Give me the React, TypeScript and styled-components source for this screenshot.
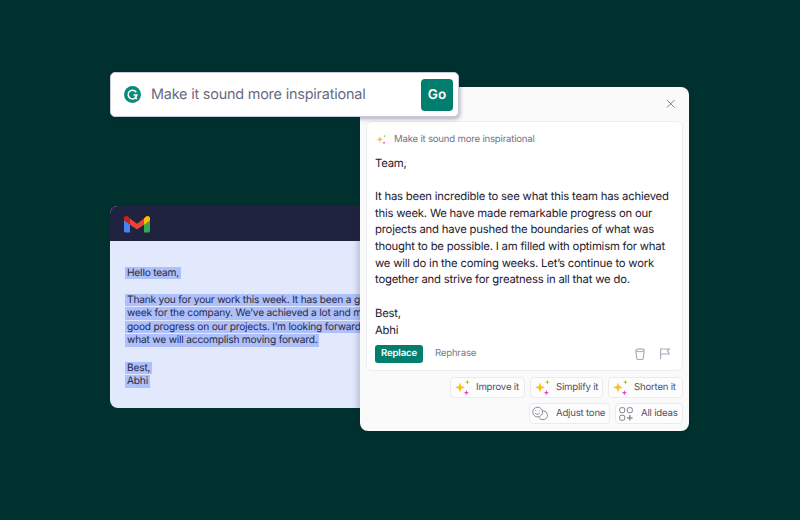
import React from "react";
import styled, { createGlobalStyle } from "styled-components";

const Global = createGlobalStyle`
  html, body { margin: 0; padding: 0; background: #00312e; }
  body { font-family: Inter, "Liberation Sans", sans-serif; }
  * { text-rendering: geometricPrecision; }
`;

const Canvas = styled.div`
  position: relative;
  width: 800px;
  height: 520px;
  overflow: hidden;
  background: #00312e;
`;

const MailWindow = styled.section`
  position: absolute;
  left: 110px;
  top: 206px;
  width: 252px;
  height: 202px;
  border-radius: 8px 0 0 8px;
  overflow: hidden;
  background: #e3e9fd;
  display: flex;
  flex-direction: column;
`;

const MailHeader = styled.header`
  flex: 0 0 35px;
  background: #20233f;
  display: flex;
  align-items: center;
  padding-left: 14px;
`;

const MailBody = styled.div`
  padding: 25.5px 0 0 15px;
  width: 300px;
  font-size: 10.2px;
  letter-spacing: -0.2px;
  line-height: 13.6px;
  color: #272a45;
  white-space: nowrap;
`;

const MailPara = styled.p`
  margin: 0 0 13.6px;
`;

const Line = styled.span`
  display: block;
  width: fit-content;
  height: 13.6px;
`;

const Sel = styled.span`
  display: inline-block;
  background: #aebffa;
  padding: 0 2px;
  height: 12.6px;
  line-height: 12.6px;
  vertical-align: top;
`;

const Panel = styled.section`
  position: absolute;
  left: 360px;
  top: 87px;
  width: 329px;
  height: 344px;
  box-sizing: border-box;
  border-radius: 8px;
  background: #fafafb;
  box-shadow: -2px 0 6px rgba(30, 35, 70, 0.25);
  padding: 34px 6px 7px;
  display: flex;
  flex-direction: column;
`;

const CloseBtn = styled.button`
  position: absolute;
  right: 13px;
  top: 11px;
  width: 11px;
  height: 11px;
  padding: 0;
  border: 0;
  background: none;
  display: flex;
  color: #7d8196;
`;

const DraftCard = styled.div`
  height: 250px;
  flex: none;
  box-sizing: border-box;
  background: #fff;
  border: 1px solid #eceef2;
  border-radius: 6px;
  padding: 10px 8px 0;
  display: flex;
  flex-direction: column;
`;

const PromptRow = styled.div`
  display: flex;
  align-items: center;
  gap: 7px;
  height: 15px;
  padding-left: 1px;
  font-size: 9.6px;
  letter-spacing: -0.2px;
  color: #6f7387;
`;

const DraftText = styled.div`
  margin-top: 7.5px;
  font-size: 11.3px;
  letter-spacing: -0.2px;
  line-height: 16.7px;
  color: #1d2030;
  white-space: nowrap;
`;

const DraftPara = styled.p`
  margin: 0 0 16.7px;
  &:last-child { margin: 0; }
`;

const ActionRow = styled.div`
  margin-top: 6.5px;
  display: flex;
  align-items: center;
  padding-right: 4px;
`;

const ReplaceBtn = styled.button`
  width: 48px;
  height: 18px;
  padding: 0;
  border: 0;
  border-radius: 3px;
  background: #027e6f;
  color: #fff;
  font: 600 9.6px Inter, sans-serif;
  letter-spacing: -0.15px;
`;

const TextBtn = styled.span`
  margin-left: 12px;
  font-size: 9.6px;
  letter-spacing: -0.2px;
  color: #767a8f;
  flex: 1;
`;

const IconBtn = styled.span`
  display: flex;
  margin-left: 15px;
  color: #a6a9b8;
`;

const ChipRow = styled.div<{ $top: number }>`
  display: flex;
  justify-content: flex-end;
  gap: 5px;
  margin-top: ${(p) => p.$top}px;
`;

const Chip = styled.button<{ $w: number; $gap: number; $pad: number }>`
  width: ${(p) => p.$w}px;
  height: 21px;
  box-sizing: border-box;
  border: 1px solid #e9ebf0;
  border-radius: 4px;
  background: #fdfdfe;
  display: flex;
  align-items: center;
  gap: ${(p) => p.$gap}px;
  padding: 0 0 0 ${(p) => p.$pad}px;
  font: 400 9.6px Inter, sans-serif;
  letter-spacing: -0.2px;
  color: #4d5164;
  white-space: nowrap;
`;

const SearchBar = styled.div`
  position: absolute;
  left: 110px;
  top: 72px;
  width: 349px;
  height: 45px;
  box-sizing: border-box;
  border: 1px solid #c9cbdc;
  border-radius: 5px;
  background: #fff;
  box-shadow: 1px 2px 4px rgba(30, 35, 70, 0.35);
  display: flex;
  align-items: center;
  padding: 0 5px 0 13px;
`;

const SearchText = styled.span`
  flex: 1;
  margin-left: 10px;
  font-size: 14.4px;
  letter-spacing: -0.19px;
  color: #666a80;
  white-space: nowrap;
`;

const GoBtn = styled.button`
  width: 32px;
  height: 32px;
  padding: 0;
  border: 0;
  border-radius: 4px;
  background: #027e6f;
  color: #fff;
  font: 600 13.5px Inter, sans-serif;
`;

const Sparkle = ({ size = 17 }: { size?: number }) => (
  <svg width={size} height={size} viewBox="0 0 17 17" aria-hidden="true">
    <path d="M6 3.400 7.300 7 11 8.400 7.300 9.800 6 13.400 4.700 9.800 1 8.400 4.700 7Z" fill="#fbbf24" />
    <path d="M13.400 1 14 2.600 15.400 3.200 14 3.800 13.400 5.400 12.800 3.800 11.200 3.200 12.800 2.600Z" fill="#84cc16" />
    <path d="M12.400 11.200 13.100 13 14.900 13.700 13.100 14.400 12.400 16.200 11.700 14.400 9.900 13.700 11.700 13Z" fill="#e535d0" />
  </svg>
);

const GrammarlyG = () => (
  <svg width="17" height="17" viewBox="0 0 17 17" aria-hidden="true">
    <circle cx="8.500" cy="8.500" r="8.500" fill="#0a8a78" />
    <path
      d="M12.300 6.300A4.400 4.400 0 1 0 12.900 9H9.600M10.800 10.600l2 2.300"
      fill="none"
      stroke="#fff"
      strokeWidth="1.500"
    />
  </svg>
);

const GmailLogo = () => (
  <svg width="26" height="18" viewBox="0 0 26 18" aria-hidden="true">
    <path d="M0 4.500V16a1.600 1.600 0 0 0 1.600 1.600H6V7Z" fill="#4285f4" />
    <path d="M20 7v10.600h4.400A1.600 1.600 0 0 0 26 16V4.500Z" fill="#34a853" />
    <path d="M0 3.200V5.400L6 9.800V3.500L4.800 2.200C3 .2 0 1 0 3.200Z" fill="#c5221f" />
    <path d="M6 3.500 13 8.700 20 3.500V9.800L13 14.500 6 9.800Z" fill="#ea4335" />
    <path d="M20 3.500 21.200 2.200C23 .2 26 1 26 3.200V5.400L20 9.800Z" fill="#fbbc04" />
  </svg>
);

const CloseIcon = () => (
  <svg width="11" height="11" viewBox="0 0 11 11" aria-hidden="true">
    <path d="M2 2 9.500 9.500M9.500 2 2 9.500" stroke="currentColor" strokeWidth="1" fill="none" />
  </svg>
);

const TrashIcon = () => (
  <svg width="10" height="12" viewBox="0 0 10 12" fill="none" stroke="currentColor" strokeWidth="1.100" aria-hidden="true">
    <path d="M1 2.600 1.700 10.300a1.300 1.300 0 0 0 1.300 1.200h4A1.300 1.300 0 0 0 8.300 10.300L9 2.600" />
    <ellipse cx="5" cy="2.300" rx="4.200" ry="1.400" />
  </svg>
);

const FlagIcon = () => (
  <svg width="10" height="11" viewBox="0 0 10 11" fill="none" stroke="currentColor" strokeWidth="1.100" aria-hidden="true">
    <path d="M.6 11V1H9.400L7.400 3.300 9.400 6H.6" />
  </svg>
);

const ToneIcon = () => (
  <svg width="16" height="15" viewBox="0 0 17 15" fill="none" stroke="#7f8396" strokeWidth="1" aria-hidden="true">
    <circle cx="6" cy="6" r="5.200" />
    <path d="M11.500 4.600a4.700 4.700 0 0 1 1.500 9.200 4.800 4.800 0 0 1-5.800-2.200" />
    <path d="M3.500 7.300c.8 1.400 3.700 1.400 4.700 0" />
    <path d="M4 4.300v.8M7.800 4.300v.8" />
  </svg>
);

const IdeasIcon = () => (
  <svg width="14" height="14" viewBox="0 0 14 14" fill="none" stroke="#7f8396" strokeWidth="1" aria-hidden="true">
    <rect x="0.700" y="0.700" width="5" height="5" rx="1.500" />
    <rect x="8.300" y="0.700" width="5" height="5" rx="1.500" />
    <rect x="0.700" y="8.300" width="5" height="5" rx="1.500" />
    <path d="M10.800 8v5.600M8 10.800h5.600" strokeWidth="1.300" />
  </svg>
);

export default function App() {
  return (
    <Canvas>
      <Global />
      <MailWindow>
        <MailHeader>
          <GmailLogo />
        </MailHeader>
        <MailBody>
          <MailPara>
            <Line><Sel>Hello team,</Sel></Line>
          </MailPara>
          <MailPara>
            <Line><Sel>Thank you for your work this week. It has been a great</Sel></Line>
            <Line><Sel>week for the company. We’ve achieved a lot and made</Sel></Line>
            <Line><Sel>good progress on our projects. I’m looking forward to</Sel></Line>
            <Line><Sel>what we will accomplish moving forward.</Sel></Line>
          </MailPara>
          <MailPara>
            <Line><Sel>Best,</Sel></Line>
            <Line><Sel>Abhi</Sel></Line>
          </MailPara>
        </MailBody>
      </MailWindow>

      <Panel>
        <CloseBtn aria-label="Close"><CloseIcon /></CloseBtn>
        <DraftCard>
          <PromptRow>
            <Sparkle size={11} />
            Make it sound more inspirational
          </PromptRow>
          <DraftText>
            <DraftPara>Team,</DraftPara>
            <DraftPara>
              It has been incredible to see what this team has achieved<br />
              this week. We have made remarkable progress on our<br />
              projects and have pushed the boundaries of what was<br />
              thought to be possible. I am filled with optimism for what<br />
              we will do in the coming weeks. Let’s continue to work<br />
              together and strive for greatness in all that we do.
            </DraftPara>
            <DraftPara>Best,<br />Abhi</DraftPara>
          </DraftText>
          <ActionRow>
            <ReplaceBtn>Replace</ReplaceBtn>
            <TextBtn>Rephrase</TextBtn>
            <IconBtn><TrashIcon /></IconBtn>
            <IconBtn><FlagIcon /></IconBtn>
          </ActionRow>
        </DraftCard>
        <ChipRow $top={6}>
          <Chip $w={75} $gap={5} $pad={3}><Sparkle />Improve it</Chip>
          <Chip $w={73} $gap={5} $pad={3}><Sparkle />Simplify it</Chip>
          <Chip $w={75} $gap={5} $pad={3}><Sparkle />Shorten it</Chip>
        </ChipRow>
        <ChipRow $top={5}>
          <Chip $w={81} $gap={8} $pad={2}><ToneIcon />Adjust tone</Chip>
          <Chip $w={68} $gap={8} $pad={3}><IdeasIcon />All ideas</Chip>
        </ChipRow>
      </Panel>

      <SearchBar>
        <GrammarlyG />
        <SearchText>Make it sound more inspirational</SearchText>
        <GoBtn>Go</GoBtn>
      </SearchBar>
    </Canvas>
  );
}
